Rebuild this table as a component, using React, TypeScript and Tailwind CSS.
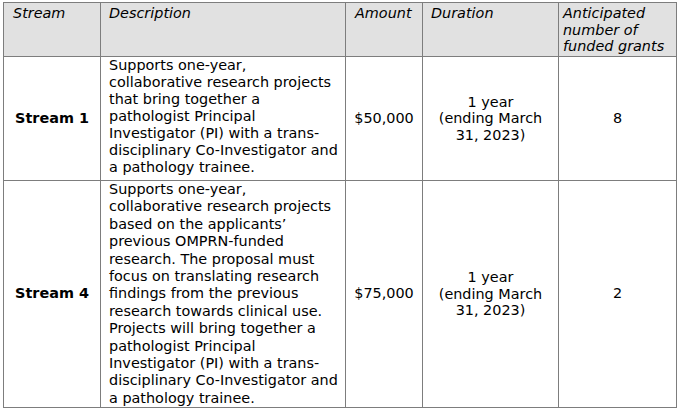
const ROWS = [
  {
    stream: 'Stream 1',
    lines: [
      'Supports one-year,',
      'collaborative research projects',
      'that bring together a',
      'pathologist Principal',
      'Investigator (PI) with a trans-',
      'disciplinary Co-Investigator and',
      'a pathology trainee.',
    ],
    amount: '$50,000',
    grants: '8',
    height: 'h-[124px]',
    leading: 'leading-[17px]',
  },
  {
    stream: 'Stream 4',
    lines: [
      'Supports one-year,',
      'collaborative research projects',
      'based on the applicants’',
      'previous OMPRN-funded',
      'research. The proposal must',
      'focus on translating research',
      'findings from the previous',
      'research towards clinical use.',
      'Projects will bring together a',
      'pathologist Principal',
      'Investigator (PI) with a trans-',
      'disciplinary Co-Investigator and',
      'a pathology trainee.',
    ],
    amount: '$75,000',
    grants: '2',
    height: 'h-[226px]',
    leading: 'leading-[17.4px]',
  },
];

const cell = 'border border-[#7d7d7d] p-0';

export default function App() {
  return (
    <div className="min-h-[411px] w-[680px] bg-white pl-[3px] pt-[2px] text-black [font-family:'DejaVu_Sans',Verdana,sans-serif] text-[14.4px]">
      <table className="table-fixed border-collapse w-[673px]">
        <colgroup>
          <col className="w-[97px]" />
          <col className="w-[245px]" />
          <col className="w-[77px]" />
          <col className="w-[136px]" />
          <col className="w-[118px]" />
        </colgroup>
        <thead>
          <tr className="h-[54px] bg-[#e1e1e1] italic leading-[16.5px] align-top text-left">
            <th className={`${cell} font-normal pl-[9px] pt-[2px]`}>Stream</th>
            <th className={`${cell} font-normal pl-[8px] pt-[2px]`}>Description</th>
            <th className={`${cell} font-normal pl-[9px] pt-[2px]`}>Amount</th>
            <th className={`${cell} font-normal pl-[8px] pt-[2px]`}>Duration</th>
            <th className={`${cell} font-normal pl-[4px] pt-[2px]`}>
              Anticipated
              <br />
              number of
              <br />
              funded grants
            </th>
          </tr>
        </thead>
        <tbody>
          {ROWS.map((r) => (
            <tr key={r.stream} className={r.height}>
              <td className={`${cell} text-center align-middle font-bold`}>{r.stream}</td>
              <td className={`${cell} align-top pl-[8px] whitespace-nowrap overflow-hidden ${r.leading}`}>
                {r.lines.map((l, i) => (
                  <div key={i}>{l}</div>
                ))}
              </td>
              <td className={`${cell} text-center align-middle`}>{r.amount}</td>
              <td className={`${cell} text-center align-middle leading-[16.5px]`}>
                1 year
                <br />
                (ending March
                <br />
                31, 2023)
              </td>
              <td className={`${cell} text-center align-middle`}>{r.grants}</td>
            </tr>
          ))}
        </tbody>
      </table>
    </div>
  );
}
